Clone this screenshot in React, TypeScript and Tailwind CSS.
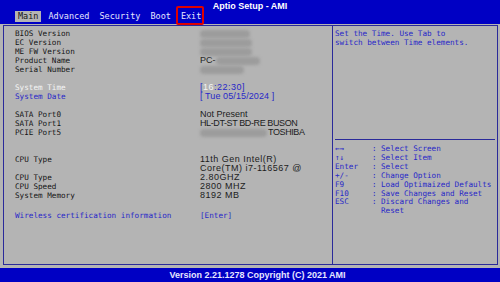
const mono = "font-['DejaVu_Sans_Mono',monospace]";
const sans = "font-['Liberation_Sans',Arial,sans-serif]";

const TABS = ['Main', 'Advanced', 'Security', 'Boot', 'Exit'];

const KEYS: { k: string; d: string }[] = [
  { k: '←→', d: 'Select Screen' },
  { k: '↑↓', d: 'Select Item' },
  { k: 'Enter', d: 'Select' },
  { k: '+/-', d: 'Change Option' },
  { k: 'F9', d: 'Load Optimaized Defaults' },
  { k: 'F10', d: 'Save Changes and Reset' },
  { k: 'ESC', d: 'Discard Changes and' },
  { k: '', d: 'Reset' },
];

function Blur({ w }: { w: number }) {
  return <span className="inline-block h-[8px] bg-[#9c9c9c] blur-[1.5px] rounded-sm" style={{ width: w }} />;
}

function Row({ label, tone = 'text-[#141414]', children }: { label?: string; tone?: string; children?: React.ReactNode }) {
  return (
    <div className="flex h-[9px] items-center">
      <div className={`w-[185px] shrink-0 ${mono} text-[7.65px] leading-[9px] whitespace-pre ${tone}`}>{label}</div>
      <div className="flex items-center whitespace-pre">{children}</div>
    </div>
  );
}

const val = `${sans} text-[9px] leading-[9px] text-[#1c1c1c]`;
const valWide = `${sans} text-[9px] leading-[9px] tracking-[0.5px] text-[#1c1c1c]`;

export default function App() {
  return (
    <div className="w-[500px] h-[282px] flex flex-col bg-[#b4b4b4] overflow-hidden">
      {/* title + tabs */}
      <header className="h-[24px] shrink-0 bg-[#0000c4]">
        <div className={`h-[11px] pt-[2px] text-center ${sans} text-[9px] leading-[9px] font-bold text-white`}>Aptio Setup - AMI</div>
        <div className={`flex gap-[4px] pl-[15px] h-[11px] ${mono} text-[8.5px] leading-[11px]`}>
          {TABS.map(t => (
            <span key={t}
              className={`relative px-[3px] ${t === 'Main' ? 'bg-[#b4b4b4] text-[#141414]' : 'text-[#e6e6ff]'}`}>
              {t}
              {t === 'Exit' && (
                <span className="absolute -left-[2px] right-0 -top-[5px] -bottom-[3px] border-2 border-[#e00000] rounded-[2px]" />
              )}
            </span>
          ))}
        </div>
      </header>

      {/* panels */}
      <main className="flex-1 flex pt-[1px] pb-[3px] pl-[3px]">
        <section className="w-[330px] border border-[#2a2a9a] pl-[11px] pt-[3px]">
          <Row label="BIOS Version"><Blur w={50} /></Row>
          <Row label="EC Version"><Blur w={52} /></Row>
          <Row label="ME FW Version"><Blur w={52} /></Row>
          <Row label="Product Name"><span className={val}>PC-</span><Blur w={44} /></Row>
          <Row label="Serial Number"><Blur w={44} /></Row>
          <Row />
          <Row label="System Time" tone="text-[#f4f4f4]">
            <span className={`${valWide} text-[#2828c8]`}>[<span className="text-[#f4f4f4]">16</span>:22:30]</span>
          </Row>
          <Row label="System Date" tone="text-[#2828c8]">
            <span className={`${sans} text-[9px] leading-[9px] tracking-[0.1px] text-[#2828c8]`}>[ Tue 05/15/2024 ]</span>
          </Row>
          <Row />
          <Row label="SATA Port0"><span className={val}>Not Present</span></Row>
          <Row label="SATA Port1"><span className={`${val} tracking-[-0.4px]`}>HL-DT-ST BD-RE BUSON</span></Row>
          <Row label="PCIE Port5"><Blur w={67} /><span className={`${val} tracking-[-0.4px] ml-[1px]`}>TOSHIBA</span></Row>
          <Row />
          <Row />
          <Row label="CPU Type"><span className={valWide}>11th Gen Intel(R)</span></Row>
          <Row><span className={valWide}>Core(TM) i7-116567 @</span></Row>
          <Row label="CPU Type"><span className={valWide}>2.80GHZ</span></Row>
          <Row label="CPU Speed"><span className={valWide}>2800 MHZ</span></Row>
          <Row label="System Memory"><span className={valWide}>8192 MB</span></Row>
          <div className="h-[11px]" />
          <Row label="Wireless certification information" tone="text-[#2828c8]">
            <span className={`${mono} text-[7.65px] leading-[9px] text-[#2828c8]`}>[Enter]</span>
          </Row>
        </section>

        <aside className="w-[165px] border-y border-r border-[#2a2a9a] flex flex-col">
          <div className={`h-[113px] pl-[2px] pt-[3px] ${mono} text-[7.65px] leading-[9px] text-[#2828c8]`}>
            <div>Set the Time. Use Tab to</div>
            <div>switch between Time elements.</div>
          </div>
          <div className="mx-[2px] border-t border-[#2a2a9a]" />
          <div className={`pl-[2px] pt-[5px] ${mono} text-[7.65px] leading-[8.9px] text-[#2828c8]`}>
            {KEYS.map((r, i) => (
              <div key={i} className="flex whitespace-pre">
                <span className="w-[37px]">{r.k}</span>
                <span className="w-[9px]">{r.k ? ':' : ''}</span>
                <span>{r.d}</span>
              </div>
            ))}
          </div>
        </aside>
      </main>

      {/* footer */}
      <footer className={`h-[14px] shrink-0 bg-[#0000c4] pl-[15px] text-center ${sans} text-[9px] leading-[14px] font-bold text-[#e6e6ff]`}>
        Version 2.21.1278 Copyright (C) 2021 AMI
      </footer>
    </div>
  );
}
